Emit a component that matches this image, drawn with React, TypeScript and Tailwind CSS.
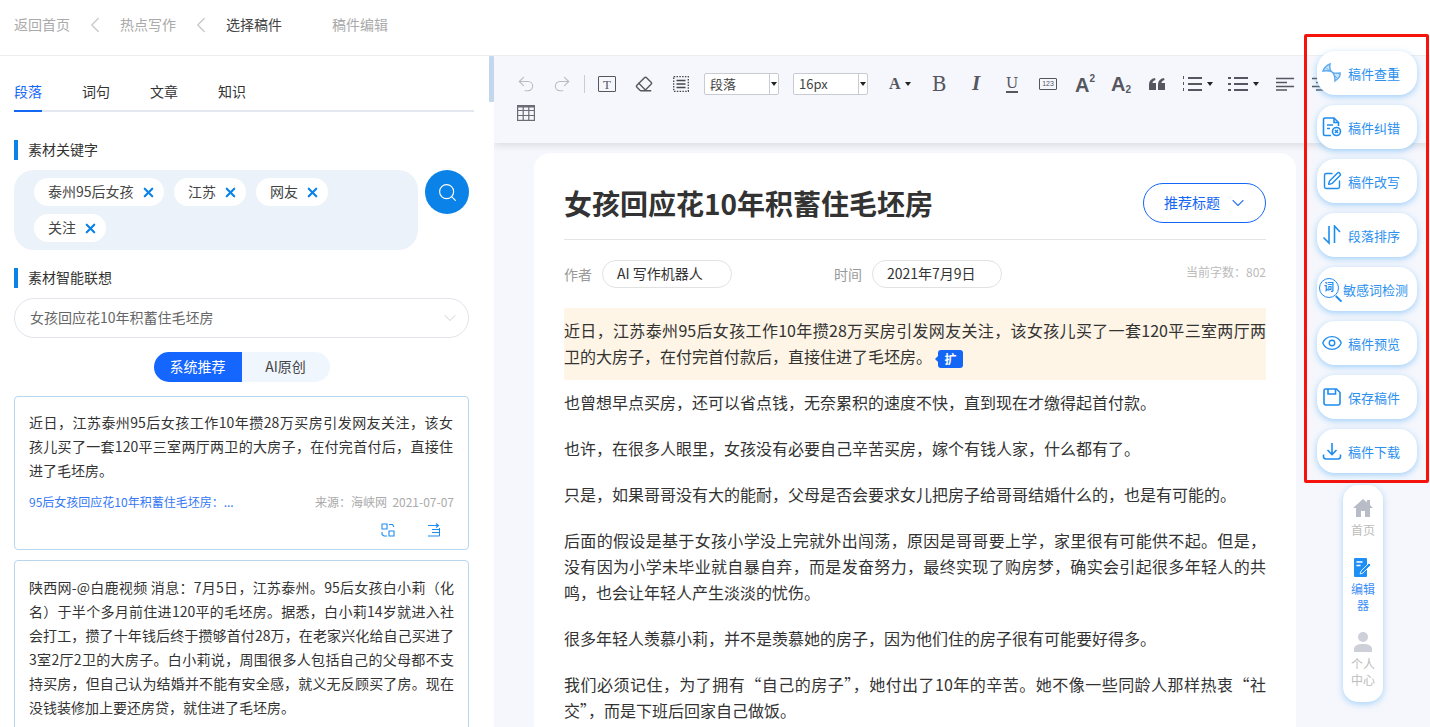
import React from "react";
import { ChevronLeft, ChevronDown, Search, X, Undo2, Redo2, Eraser, Eye, SquarePen } from "lucide-react";

function Tag({ t, w }: { t: string; w: string }) {
  return (
    <div className={`${w} h-7 rounded-[14px] bg-white pl-[14px] flex items-center justify-between pr-[8px] text-sm text-[#444]`}>
      <span className="whitespace-nowrap -mt-[2px]">{t}</span>
      <X size={15} strokeWidth={3.4} className="text-[#0a82e8] shrink-0" />
    </div>
  );
}

function Label({ t }: { t: string }) {
  return (
    <div className="flex items-center h-5 text-[14px] text-[#333]">
      <div className="w-1 h-5 bg-[#0a82e8] mr-[10px]" />
      <span className="-mt-[2px]">{t}</span>
    </div>
  );
}

function Cell({ children, w = 36 }: { children?: React.ReactNode; w?: number }) {
  return (
    <div className="h-[28px] flex items-center justify-center shrink-0 text-[#55565f]" style={{ width: w }}>
      {children}
    </div>
  );
}

function Caret() {
  return <span className="w-0 h-0 border-x-[3px] border-x-transparent border-t-[4px] border-t-[#222] ml-[4px]" />;
}

function Caret0() {
  return <span className="w-0 h-0 border-x-[3px] border-x-transparent border-t-[4px] border-t-[#222]" />;
}

function Lines({ num }: { num?: boolean }) {
  return (
    <svg width="22" height="18" viewBox="0 0 22 18" fill="none" stroke="#55565f">
      {[3, 9, 15].map((y) => (
        <g key={y}>
          <path d={`M7 ${y}H21`} strokeWidth="2" />
          {num ? <path d={`M2.500 ${y - 2}V${y + 1}`} strokeWidth="1" /> : <path d={`M1 ${y}H4`} strokeWidth="2" />}
        </g>
      ))}
    </svg>
  );
}

function Select({ t, cls }: { t: string; cls: string }) {
  return (
    <div className={`${cls} w-[75px] h-[22px] bg-white border border-[#c8cbd2] rounded-[2px] flex items-center justify-between text-[13px] text-[#444] shrink-0`}>
      <span className="pl-[5px] -mt-[1px]">{t}</span>
      <span className="w-[9px] h-full border-l border-[#c8cbd2] flex items-center justify-center"><Caret0 /></span>
    </div>
  );
}

function Toolbar() {
  return (
    <div className="relative z-10 h-[87px] shrink-0 bg-[#f5f7fc] shadow-[0_2px_8px_rgba(0,0,0,0.12)] pl-[14px] pt-[14px] overflow-hidden">
      <div className="flex items-center h-[28px] w-[900px]">
        <Cell><Undo2 size={20} strokeWidth={1.3} className="text-[#b9bcc4]" /></Cell>
        <Cell><Redo2 size={20} strokeWidth={1.3} className="text-[#b9bcc4]" /></Cell>
        <div className="w-px h-[18px] bg-[#c9ccd2] mx-[4px] shrink-0" />
        <Cell w={36}>
          <div className="w-[18px] h-[16px] border-[1.5px] border-[#55565f] rounded-[1px] flex items-center justify-center text-[13px] leading-none font-['Liberation_Serif',serif]">T</div>
        </Cell>
        <Cell w={38}><Eraser size={18} strokeWidth={1.8} /></Cell>
        <Cell w={36}>
          <svg width="16" height="16" viewBox="0 0 16 16" fill="none" stroke="#44454d" strokeWidth="1.300"><rect x=".7" y=".7" width="14.600" height="14.600" strokeDasharray="1.500 1.300" /><path d="M3.500 4.500h9M3.500 8h9M3.500 11.500h9" /></svg>
        </Cell>
        <Select t="段落" cls="ml-[5px]" />
        <Select t="16px" cls="ml-[14px]" />
        <div className="ml-[21px] w-[32px] flex items-center shrink-0 font-['Liberation_Serif',serif] font-bold text-[16px] text-[#55565f]">A<Caret /></div>
        <Cell w={36}><span className="font-['DejaVu_Serif',serif] text-[20px] leading-none text-[#55565f]">B</span></Cell>
        <Cell w={38}><span className="font-['Liberation_Serif',serif] italic font-bold text-[21px] text-[#55565f]">I</span></Cell>
        <Cell w={34}>
          <span className="font-['DejaVu_Serif',serif] text-[15px] leading-[15px] border-b-2 border-[#55565f] text-[#55565f]">U</span>
        </Cell>
        <Cell w={38}>
          <span className="w-[18px] h-[12px] border border-[#55565f] rounded-[1px] text-[7px] leading-[10px] text-center font-['Liberation_Sans',sans-serif]">123</span>
        </Cell>
        <Cell w={36}>
          <div className="flex items-start h-[20px] font-['Liberation_Sans',sans-serif] font-bold text-[#55565f]">
            <span className="text-[20px] leading-[22px]">A</span>
            <span className="text-[10px] leading-[10px]">2</span>
          </div>
        </Cell>
        <Cell w={36}>
          <div className="flex items-end h-[20px] font-['Liberation_Sans',sans-serif] font-bold text-[#55565f]">
            <span className="text-[20px] leading-[20px]">A</span>
            <span className="text-[10px] leading-[10px] -mb-[1px]">2</span>
          </div>
        </Cell>
        <Cell w={36}>
          <svg width="16" height="12" viewBox="0 0 16 12" fill="#55565f"><path d="M0 12V6.500C0 3 2 .8 6 0l.5 2C4.500 2.500 3.500 3.500 3.500 5H7v7zM9 12V6.500C9 3 11 .8 15 0l.5 2c-2 .5-3 1.500-3 3H16v7z" /></svg>
        </Cell>
        <Cell w={44}><Lines num /><Caret /></Cell>
        <Cell w={47}><Lines /><Caret /></Cell>
        <Cell w={38}>
          <svg width="18" height="14" viewBox="0 0 18 14" stroke="#55565f"><path d="M0 1.500H18M0 5.500H11M0 9.500H18M0 13H11" strokeWidth="1.300" /></svg>
        </Cell>
        <Cell w={34}>
          <svg width="18" height="14" viewBox="0 0 18 14" stroke="#55565f"><path d="M0 1.500H18M4 5.500H14M0 9.500H18M4 13H14" strokeWidth="1.300" /></svg>
        </Cell>
      </div>
      <div className="flex items-center h-[28px] mt-[1px]">
        <Cell>
          <svg width="18" height="16" viewBox="0 0 18 16" fill="none" stroke="#6b6c75" strokeWidth="1.200"><rect x=".6" y=".6" width="16.800" height="14.800" /><path d="M.6 1.500h16.800" strokeWidth="2" /><path d="M.6 5.500h16.800M.6 10.500h16.800M6.200 1v14M11.800 1v14" /></svg>
        </Cell>
      </div>
    </div>
  );
}

const stroke = { fill: "none", stroke: "#1f8cf0", strokeWidth: 1.6 } as const;

const tools: { t: string; icon: React.ReactNode; tight?: boolean }[] = [
  {
    t: "稿件查重",
    icon: (
      <svg width="22" height="22" viewBox="0 0 22 22" fill="#a9d3f7" fillOpacity=".6" stroke="#5fabf2" strokeWidth="1.500">
        <path d="M9 2Q8 8 11 10Q14 12 14 19Q20 15 19 11Q14 12 11 10Q8 8 2 9Q4 4 9 2Z" />
        <path d="M5.500 6l3 3M13 13l3 3" strokeWidth="1" />
      </svg>
    ),
  },
  {
    t: "稿件纠错",
    icon: (
      <svg width="20" height="20" viewBox="0 0 20 20" {...stroke}>
        <path d="M9 18.500H3a1.500 1.500 0 0 1-1.500-1.500V2.500A1.500 1.500 0 0 1 3 1h9l4.500 4.500V9" />
        <path d="M12 1v4.500h4.500M5 8h6M5 11.500h3" />
        <circle cx="14.500" cy="14.500" r="4" />
        <path d="M13 13l3 3M16 13l-3 3" />
      </svg>
    ),
  },
  { t: "稿件改写", icon: <SquarePen size={20} strokeWidth={1.7} className="text-[#1f8cf0]" /> },
  {
    t: "段落排序",
    icon: (
      <svg width="20" height="20" viewBox="0 0 20 20" {...stroke}>
        <path d="M7 1v17L1.500 12.500M12.500 18V1L18 7" />
      </svg>
    ),
  },
  {
    t: "敏感词检测",
    tight: true,
    icon: (
      <div className="relative w-[23px] h-[23px]">
        <div className="w-[20px] h-[20px] rounded-full border-[1.500px] border-[#1f8cf0] text-[#1f8cf0] text-[10px] font-bold leading-[16px] text-center">词</div>
        <div className="absolute left-[17px] top-[17px] w-[8px] h-[1.500px] bg-[#1f8cf0] rotate-45 origin-left" />
      </div>
    ),
  },
  { t: "稿件预览", icon: <Eye size={22} strokeWidth={1.5} className="text-[#1f8cf0]" /> },
  {
    t: "保存稿件",
    icon: (
      <svg width="18" height="18" viewBox="0 0 18 18" {...stroke}>
        <path d="M2.500 1h11L17 4.500V15a2 2 0 0 1-2 2H3a2 2 0 0 1-2-2V2.500A1.500 1.500 0 0 1 2.500 1z" />
        <path d="M5 1v5h7.500V1" />
      </svg>
    ),
  },
  {
    t: "稿件下载",
    icon: (
      <svg width="20" height="20" viewBox="0 0 20 20" {...stroke}>
        <path d="M10 2v11M5.500 9l4.500 4.500L14.500 9M1.500 13.500v2a2.500 2.500 0 0 0 2.500 2.500h12a2.500 2.500 0 0 0 2.500-2.500v-2" />
      </svg>
    ),
  },
];

function RightTools() {
  return (
    <div className="absolute left-[1304px] top-[34px] w-[125px] h-[449px] z-20 border-[3px] border-[#f5140c] rounded-[2px] pt-[14px] pl-[10px]">
      <div className="flex flex-col gap-[10px]">
        {tools.map((x) => (
          <div
            key={x.t}
            className={`w-[100px] h-[44px] bg-white rounded-[18px] shadow-[0_2px_6px_rgba(90,175,250,0.55)] flex items-center text-[13px] text-[#2b90ee] ${x.tight ? "pl-[2px] gap-[2px]" : "pl-[4px] gap-[5px]"}`}
          >
            <span className="w-[22px] flex justify-center shrink-0">{x.icon}</span>
            <span className="whitespace-nowrap mt-[1px]">{x.t}</span>
          </div>
        ))}
      </div>
    </div>
  );
}

function SideNav() {
  return (
    <div className="absolute left-[1343px] top-[485px] w-[40px] h-[217px] z-20 bg-white rounded-[15px] shadow-[0_2px_6px_rgba(90,175,250,0.5)] flex flex-col items-center pt-[14px] text-[12px] leading-[16px] text-center text-[#bcbcbc]">
      <svg width="20" height="18" viewBox="0 0 20 18" fill="#b8bcc6"><path d="M10 0L0 9h3v9h5v-6h4v6h5V9h3l-3-3V1h-3v2.500z" /></svg>
      <div className="mt-[5px]">首页</div>
      <svg className="mt-[20px]" width="18" height="19" viewBox="0 0 18 19">
        <rect x="0" y="0" width="13" height="19" rx="1" fill="#1e90f5" />
        <path d="M2.500 4h6M2.500 7.500h4" stroke="#fff" strokeWidth="1.400" />
        <path d="M7 13l8-8 2 2-8 8-3 1z" fill="#1e90f5" stroke="#fff" strokeWidth=".8" />
      </svg>
      <div className="mt-[4px] text-[#3e8ef7] px-[4px]">编辑器</div>
      <svg className="mt-[19px]" width="18" height="20" viewBox="0 0 18 20" fill="#cdd0d8"><circle cx="9" cy="5" r="5" /><path d="M0 20v-3c0-3 3-5 9-5s9 2 9 5v3z" /></svg>
      <div className="mt-[4px] px-[4px]">个人中心</div>
    </div>
  );
}

function LeftPanel() {
  return (
    <div className="w-[494px] shrink-0 relative overflow-hidden pl-[14px] pt-[16px]">
      <div className="absolute left-[489px] top-0 w-[5px] h-[46px] bg-[#c3d7ec] rounded-[1px]" />
      <div className="w-[460px] h-[40px] border-b-2 border-[#e3e7ee] flex gap-[40px] text-[14px] text-[#333]">
        <div className="h-[40px] w-[28px] border-b-2 border-[#1466f5] text-[#1466f5] leading-[38px] whitespace-nowrap">段落</div>
        <div className="leading-[38px]">词句</div>
        <div className="leading-[38px]">文章</div>
        <div className="leading-[38px]">知识</div>
      </div>
      <div className="mt-[28px]"><Label t="素材关键字" /></div>
      <div className="flex mt-[10px] gap-[7px]">
        <div className="w-[404px] h-[80px] bg-[#ebf2f9] rounded-[20px] pl-[20px] pr-[70px] pt-[8px] flex flex-wrap content-start gap-x-[10px] gap-y-[8px]">
          <Tag t="泰州95后女孩" w="w-[130px]" />
          <Tag t="江苏" w="w-[72px]" />
          <Tag t="网友" w="w-[72px]" />
          <Tag t="关注" w="w-[72px]" />
        </div>
        <div className="w-[44px] h-[44px] rounded-full bg-[#0a82e8] flex items-center justify-center">
          <Search size={21} strokeWidth={1.3} className="text-white" />
        </div>
      </div>
      <div className="mt-[18px]"><Label t="素材智能联想" /></div>
      <div className="mt-[10px] w-[455px] h-[40px] rounded-[20px] border border-[#e1e4ec] flex items-center justify-between pl-[15px] pr-[8px] text-[14px] text-[#666]">
        <span className="-mt-[2px]">女孩回应花10年积蓄住毛坯房</span>
        <ChevronDown size={20} strokeWidth={1} className="text-[#c4c7ce]" />
      </div>
      <div className="mt-[14px] w-[455px] flex justify-center">
        <div className="w-[88px] h-[30px] rounded-l-[15px] bg-[#1466ff] text-white text-[14px] leading-[29px] text-center">系统推荐</div>
        <div className="w-[88px] h-[30px] rounded-r-[15px] bg-[#f0f6fe] text-[#444] text-[14px] leading-[29px] text-center">AI原创</div>
      </div>
      <div className="mt-[14px] w-[455px] h-[154px] border border-[#b9d6ef] rounded-[4px] pl-[14px] pr-[15px] pt-[14px]">
        <p className="text-[14px] leading-[24px] text-[#333] text-justify -mt-[1px]">
          近日，江苏泰州95后女孩工作10年攒28万买房引发网友关注，该女孩儿买了一套120平三室两厅两卫的大房子，在付完首付后，直接住进了毛坯房。
        </p>
        <div className="mt-[11px] -mr-[1px] flex justify-between text-[12px] leading-[18px]">
          <span className="text-[#3478f6]">95后女孩回应花10年积蓄住毛坯房：...</span>
          <span className="text-[#aaa]">来源：海峡网&nbsp;&nbsp;2021-07-07</span>
        </div>
        <div className="mt-[12px] flex justify-end gap-[33px] pr-[13px]">
          <svg width="14" height="14" viewBox="0 0 14 14" fill="none" stroke="#1f8cf0" strokeWidth="1.100"><path d="M1 6V1.500A.5.500 0 0 1 1.500 1H6v5zM8 1.500h3.500l1.500 2.500M1 9v2.500L3 13h3M8 8h5v5H8z" /></svg>
          <svg width="12" height="14" viewBox="0 0 12 14" fill="none" stroke="#1f8cf0" strokeWidth="1.100"><path d="M0 2.500H10M8 .5L10.500 2.500L8 4.500M4 6.500h7.500M4 9.500h7.500M0 13h11.500M11.500 5v8" /></svg>
        </div>
      </div>
      <div className="mt-[10px] w-[455px] h-[180px] border border-[#b9d6ef] rounded-[4px] px-[14px] pt-[14px]">
        <p className="text-[14px] leading-[24px] text-[#333] text-justify">
          陕西网-@白鹿视频 消息：7月5日，江苏泰州。95后女孩白小莉（化名）于半个多月前住进120平的毛坯房。据悉，白小莉14岁就进入社会打工，攒了十年钱后终于攒够首付28万，在老家兴化给自己买进了3室2厅2卫的大房子。白小莉说，周围很多人包括自己的父母都不支持买房，但自己认为结婚并不能有安全感，就义无反顾买了房。现在没钱装修加上要还房贷，就住进了毛坯房。
        </p>
      </div>
    </div>
  );
}

const paras = [
  "也曾想早点买房，还可以省点钱，无奈累积的速度不快，直到现在才缴得起首付款。",
  "也许，在很多人眼里，女孩没有必要自己辛苦买房，嫁个有钱人家，什么都有了。",
  "只是，如果哥哥没有大的能耐，父母是否会要求女儿把房子给哥哥结婚什么的，也是有可能的。",
  "后面的假设是基于女孩小学没上完就外出闯荡，原因是哥哥要上学，家里很有可能供不起。但是，没有因为小学未毕业就自暴自弃，而是发奋努力，最终实现了购房梦，确实会引起很多年轻人的共鸣，也会让年轻人产生淡淡的忧伤。",
  "很多年轻人羡慕小莉，并不是羡慕她的房子，因为他们住的房子很有可能要好得多。",
  "我们必须记住，为了拥有“自己的房子”，她付出了10年的辛苦。她不像一些同龄人那样热衷“社交”，而是下班后回家自己做饭。",
];

function Editor() {
  return (
    <div className="flex-1 min-w-0 bg-[#f5f7fc] flex flex-col overflow-hidden">
      <Toolbar />
      <div className="ml-[40px] mt-[10px] w-[762px] flex-1 bg-white rounded-t-[16px] px-[30px] pt-[30px]">
        <div className="flex items-center justify-between h-[40px]">
          <h1 className="text-[28px] font-bold text-[#333] leading-[40px]">女孩回应花10年积蓄住毛坯房</h1>
          <div className="w-[123px] h-[40px] rounded-[20px] border border-[#1466f5] flex items-center pl-[20px] text-[14px] text-[#1466f5]">
            <span className="-mt-[1px]">推荐标题</span>
            <ChevronDown size={20} strokeWidth={1.4} className="ml-[8px] text-[#3a7cf2]" />
          </div>
        </div>
        <div className="h-px bg-[#e5e5e5] mt-[16px]" />
        <div className="mt-[20px] h-[28px] flex items-center text-[14px]">
          <span className="text-[#999]">作者</span>
          <div className="ml-[10px] w-[130px] h-[28px] rounded-[14px] border border-[#e2e2e2] pl-[14px] leading-[25px] text-[#333]">AI 写作机器人</div>
          <span className="ml-[102px] text-[#999]">时间</span>
          <div className="ml-[10px] w-[130px] h-[28px] rounded-[14px] border border-[#e2e2e2] pl-[14px] leading-[25px] text-[#333]">2021年7月9日</div>
          <span className="ml-auto -mt-[4px] text-[12px] text-[#bbb]">当前字数：802</span>
        </div>
        <div className="mt-[20px] text-[16px] leading-[26px] text-[#333] text-justify">
          <p className="bg-[#fef5e6] pt-[9px] pb-[11px]">
            近日，江苏泰州95后女孩工作10年攒28万买房引发网友关注，该女孩儿买了一套120平三室两厅两卫的大房子，在付完首付款后，直接住进了毛坯房。
            <span className="relative inline-block ml-[6px] w-[25px] h-[18px] bg-[#1466f5] rounded-[3px] text-white text-[12px] font-bold leading-[17px] text-center align-[-1px]">
              扩
              <span className="absolute -left-[3px] top-[6px] w-0 h-0 border-y-[3px] border-y-transparent border-r-[3px] border-r-[#1466f5]" />
            </span>
          </p>
          {paras.map((p) => (
            <p key={p} className="pt-[9px] pb-[11px]">{p}</p>
          ))}
        </div>
      </div>
    </div>
  );
}

export default function App() {
  return (
    <div className="relative w-[1430px] h-[727px] overflow-hidden bg-white font-['Noto_Sans_CJK_SC',sans-serif]">
      <div className="h-[56px] border-b border-[#eeeeee] flex items-center pl-[14px] pb-[6px] text-[14px] text-[#aaa]">
        <span>返回首页</span>
        <ChevronLeft size={26} strokeWidth={1.2} className="mx-[12px] text-[#c8c8c8]" />
        <span>热点写作</span>
        <ChevronLeft size={26} strokeWidth={1.2} className="mx-[12px] text-[#c8c8c8]" />
        <span className="text-[#444]">选择稿件</span>
        <span className="ml-[50px]">稿件编辑</span>
      </div>
      <div className="flex h-[671px]">
        <LeftPanel />
        <Editor />
      </div>
      <RightTools />
      <SideNav />
    </div>
  );
}
